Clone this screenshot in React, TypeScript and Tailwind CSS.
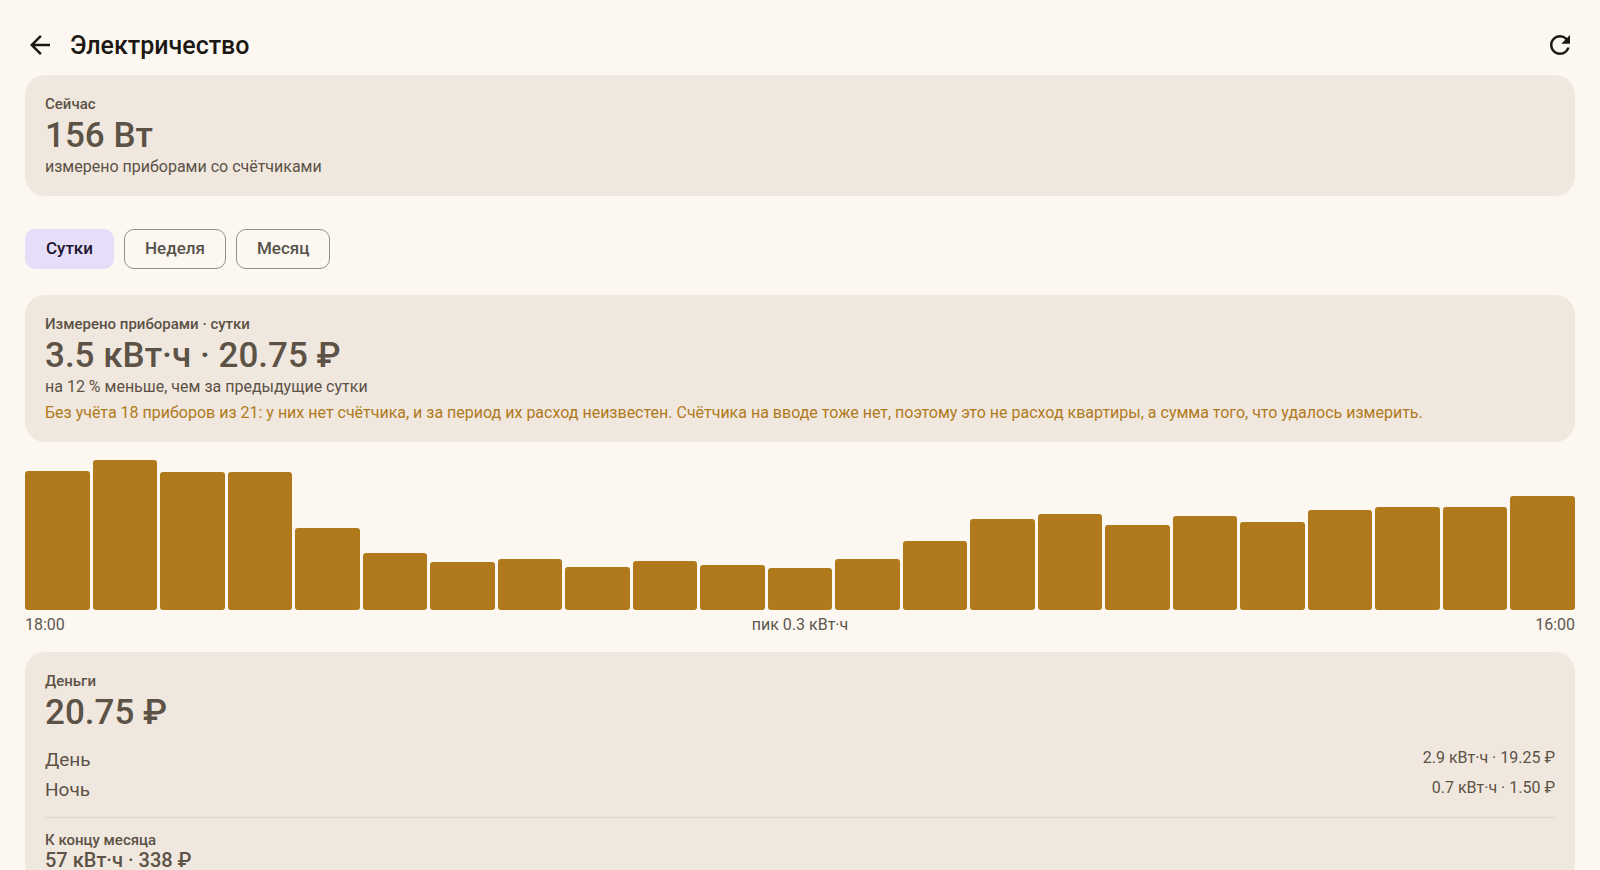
import React, { useState } from 'react';
import clsx from 'clsx';
import { MdArrowBack, MdRefresh } from 'react-icons/md';

interface StatCardProps {
  label: string;
  value: string;
  children?: React.ReactNode;
}

interface TariffRow {
  name: string;
  value: string;
}

const periods = ['Сутки', 'Неделя', 'Месяц'];

// percent of the peak hour
const hours = [
  93, 100, 92, 92, 55, 38, 32, 34, 29, 33, 30, 28, 34, 46, 61, 64, 57, 63, 59, 67, 69, 69, 76,
];

const tariffs: TariffRow[] = [
  { name: 'День', value: '2.9 кВт·ч · 19.25 ₽' },
  { name: 'Ночь', value: '0.7 кВт·ч · 1.50 ₽' },
];

const StatCard: React.FC<StatCardProps> = ({ label, value, children }) => (
  <section className="rounded-[20px] bg-[#f0e8df] px-5 pt-[19px] pb-4">
    <h2 className="text-[15px] leading-5 font-medium">{label}</h2>
    <p className="mt-1 text-[35px] leading-9 font-medium">{value}</p>
    {children}
  </section>
);

const UsageChart: React.FC = () => (
  <div className="mt-[18px] mb-[15px]">
    <div className="flex h-[150px] items-end gap-[3px]">
      {hours.map((height, i) => (
        <div key={i} className="flex-1 rounded-[3px] bg-[#b07a1c]" style={{ height: `${height}%` }} />
      ))}
    </div>
    <div className="mt-[3px] flex justify-between text-[16px] leading-6 text-[#5c574f]">
      <span>18:00</span>
      <span>пик 0.3 кВт·ч</span>
      <span>16:00</span>
    </div>
  </div>
);

const App: React.FC = () => {
  const [period, setPeriod] = useState('Сутки');

  return (
    <div className="min-h-screen bg-[#fcf8f1] px-[25px] pt-[30px] pb-6 font-['Roboto',sans-serif] text-[#5c5246]">
      <header className="mb-[15px] flex h-[30px] items-start gap-[15px] text-[#1c1914]">
        <button aria-label="Назад">
          <MdArrowBack className="size-[30px]" />
        </button>
        <h1 className="flex-1 text-[25px] leading-8 font-medium">Электричество</h1>
        <button aria-label="Обновить">
          <MdRefresh className="size-[30px]" />
        </button>
      </header>

      <StatCard label="Сейчас" value="156 Вт">
        <p className="text-[16px] leading-[26px]">измерено приборами со счётчиками</p>
      </StatCard>

      <div className="mt-[33px] mb-[26px] flex gap-2.5">
        {periods.map((name) => (
          <button
            key={name}
            onClick={() => setPeriod(name)}
            className={clsx(
              'h-10 rounded-[10px] border px-5 text-[17px] font-medium',
              name === period
                ? 'border-[#e6ddf8] bg-[#e6ddf8] text-[#1d1530]'
                : 'border-[#949083] text-[#57524a]'
            )}
          >
            {name}
          </button>
        ))}
      </div>

      <StatCard label="Измерено приборами · сутки" value="3.5 кВт·ч · 20.75 ₽">
        <p className="text-[16px] leading-[26px]">на 12 % меньше, чем за предыдущие сутки</p>
        <p className="text-[16px] leading-[26px] text-[#b07a1c]">
          Без учёта 18 приборов из 21: у них нет счётчика, и за период их расход неизвестен. Счётчика на вводе
          тоже нет, поэтому это не расход квартиры, а сумма того, что удалось измерить.
        </p>
      </StatCard>

      <UsageChart />

      <StatCard label="Деньги" value="20.75 ₽">
        <dl className="mt-[14px]">
          {tariffs.map((row) => (
            <div key={row.name} className="flex justify-between">
              <dt className="text-[19px] leading-[30px]">{row.name}</dt>
              <dd className="text-[16px] leading-[26px]">{row.value}</dd>
            </div>
          ))}
        </dl>
        <hr className="my-3 border-[#ddd5ca]" />
        <h3 className="text-[15px] leading-5 font-medium">К концу месяца</h3>
        <p className="text-[20px] leading-5 font-medium">57 кВт·ч · 338 ₽</p>
      </StatCard>
    </div>
  );
};

export default App;
